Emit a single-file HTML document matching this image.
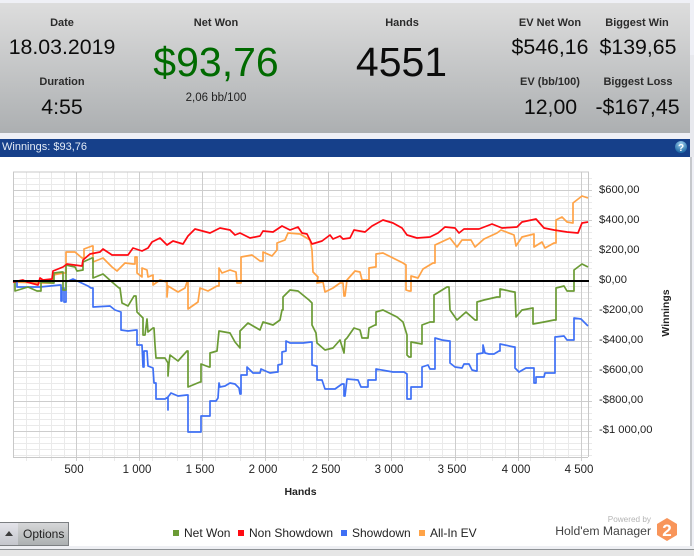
<!DOCTYPE html>
<html><head><meta charset="utf-8">
<style>
html,body{margin:0;padding:0}
body{width:694px;height:556px;overflow:hidden;position:relative;background:#eff0f6;font-family:"Liberation Sans",sans-serif;color:#111}
.a{position:absolute;white-space:nowrap;text-align:center;transform:translateX(-50%)}
.h{font-size:11px;font-weight:bold;color:#2b2b2b;line-height:14px}
.m{font-size:21.3px;line-height:26px;color:#0c0c0c}
.b{font-size:41px;line-height:46px}
.y{position:absolute;left:599px;font-size:11.2px;line-height:14px;color:#222}
.x{position:absolute;top:463px;font-size:11.5px;line-height:14px;color:#222;transform:translateX(-50%)}
.l{position:absolute;top:526px;font-size:12px;line-height:14px;color:#222}
.s{position:absolute;top:530px;width:6px;height:6px}
</style></head><body>
<div style="position:absolute;left:0;top:3px;width:690px;height:130px;background:linear-gradient(#dddddd,#acafb1)"></div>
<div class="a h" style="left:62px;top:16px">Date</div>
<div class="a m" style="left:62px;top:34px">18.03.2019</div>
<div class="a h" style="left:62px;top:75px">Duration</div>
<div class="a m" style="left:62px;top:94px">4:55</div>
<div class="a h" style="left:216px;top:16px">Net Won</div>
<div class="a b" style="left:216px;top:39px;color:#006a00">$93,76</div>
<div class="a" style="left:216px;top:91px;font-size:11.5px;line-height:14px;color:#222">2,06 bb/100</div>
<div class="a h" style="left:402px;top:16px">Hands</div>
<div class="a b" style="left:401.5px;top:39px;color:#0c0c0c">4551</div>
<div class="a h" style="left:550px;top:16px">EV Net Won</div>
<div class="a m" style="left:550px;top:34px">$546,16</div>
<div class="a h" style="left:637px;top:16px">Biggest Win</div>
<div class="a m" style="left:638px;top:34px">$139,65</div>
<div class="a h" style="left:550px;top:75px">EV (bb/100)</div>
<div class="a m" style="left:550.5px;top:94px">12,00</div>
<div class="a h" style="left:638px;top:75px">Biggest Loss</div>
<div class="a m" style="left:637.5px;top:94px">-$167,45</div>

<div style="position:absolute;left:0;top:139px;width:690px;height:18px;background:#16408a"></div>
<div style="position:absolute;left:2px;top:140px;font-size:11px;line-height:15px;color:#e4ecf6">Winnings: $93,76</div>
<svg style="position:absolute;left:674px;top:140px" width="14" height="14" viewBox="0 0 14 14"><defs><radialGradient id="q" cx=".5" cy=".25" r=".8"><stop offset="0" stop-color="#9fd0ee"/><stop offset="1" stop-color="#0f5c9c"/></radialGradient></defs><circle cx="7" cy="7" r="6" fill="url(#q)"/><text x="7" y="11" text-anchor="middle" font-family="Liberation Sans" font-weight="bold" font-size="10" fill="#fff">?</text></svg>

<div style="position:absolute;left:0;top:157px;width:690px;height:389px;background:#fff"></div>
<div style="position:absolute;left:690px;top:55px;width:4px;height:102px;background:#e8e9ee"></div>
<div style="position:absolute;left:690px;top:157px;width:2px;height:390px;background:#c6c8cc"></div>
<div style="position:absolute;left:0;top:546px;width:694px;height:3px;background:#eeeff3"></div>
<div style="position:absolute;left:0;top:549px;width:694px;height:1px;background:#8e9296"></div>
<div style="position:absolute;left:0;top:550px;width:694px;height:6px;background:#e6e6e6"></div>

<svg style="position:absolute;left:0;top:0" width="694" height="556" fill="none">
<path stroke="#eaeaea" d="M26.5 172V461M39.5 172V457M51.5 172V461M64.5 172V457M89.5 172V461M102.5 172V457M114.5 172V461M127.5 172V457M152.5 172V461M165.5 172V457M177.5 172V461M190.5 172V457M215.5 172V461M228.5 172V457M240.5 172V461M253.5 172V457M278.5 172V461M291.5 172V457M303.5 172V461M316.5 172V457M341.5 172V461M354.5 172V457M366.5 172V461M379.5 172V457M404.5 172V461M417.5 172V457M429.5 172V461M442.5 172V457M467.5 172V461M480.5 172V457M492.5 172V461M505.5 172V457M530.5 172V461M543.5 172V457M555.5 172V461M568.5 172V457"/>
<path stroke="#eaeaea" d="M13 178.5H592M13 184.5H592M13 196.5H592M13 202.5H592M13 208.5H592M13 214.5H592M13 226.5H592M13 232.5H592M13 238.5H592M13 244.5H592M13 256.5H592M13 262.5H592M13 268.5H592M13 274.5H592M13 286.5H592M13 292.5H592M13 298.5H592M13 304.5H592M13 316.5H592M13 322.5H592M13 328.5H592M13 334.5H592M13 347.5H592M13 353.5H592M13 359.5H592M13 365.5H592M13 377.5H592M13 383.5H592M13 389.5H592M13 395.5H592M13 407.5H592M13 413.5H592M13 419.5H592M13 425.5H592M13 437.5H592M13 443.5H592M13 449.5H592M13 455.5H592"/>
<path stroke="#cdcdcd" d="M76.5 172V461M139.5 172V461M202.5 172V461M265.5 172V461M328.5 172V461M391.5 172V461M455.5 172V461M518.5 172V461M581.5 172V461M13 190.5H592M13 220.5H592M13 250.5H592M13 310.5H592M13 341.5H592M13 371.5H592M13 401.5H592M13 431.5H592"/>
<path stroke="#c8c8c8" d="M13.5 457V172H588.5V457M13 457.5H588"/>
<g stroke-width="1.7" stroke-linejoin="round" stroke-linecap="butt">
<polyline stroke="#ffa347" points="13,282 40,283 53,283 53,275 63,273 65,273 66,273 66,252 75,252 82,258 84,258 84,249 92,246 93,246 93,262 103,258 112,267 117,271 125,263 133,264 135,264 135,257 137,257 137,273 142,277 142,268 147,270 148,277 153,275 153,285 160,280 167,282 167,297 168,286 178,292 185,288 187,282 188,282 188,309 198,302 200,288 208,291 217,286 219,286 219,268 222,273 230,270 236,272 237,283 240,283 241,283 241,257 252,255 260,261 263,261 263,252 272,256 277,250 277,243 285,240 288,233 300,234 310,240 312,250 313,272 318,277 317,283 323,282 325,292 333,288 340,283 343,283 344,296 345,296 347,280 355,271 360,272 362,280 367,280 369,280 369,268 375,267 376,267 376,254 383,253 397,260 403,263 406,265 406,290 409,291 411,291 411,276 418,278 423,269 433,263 435,263 435,245 450,238 457,247 462,240 471,240 475,247 484,239 497,233 501,230 514,235 516,246 522,237 534,234 534,247 542,242 545,248 554,243 556,243 556,220 562,217 567,222 573,223 573,203 582,196 588,198"/>
<polyline stroke="#3f70f5" points="13,282 17,282 17,287 40,287 60,285 61,285 61,301 62,301 62,288 64,288 64,302 66,302 66,282 73,279 88,286 91,288 93,288 93,307 110,306 115,310 121,312 121,330 128,331 136,330 137,330 137,345 142,345 143,367 144,367 144,351 147,351 148,366 153,368 154,383 156,383 156,399 165,399 168,397 168,410 168,397 171,393 178,396 187,395 188,395 188,432 200,432 201,432 201,416 209,416 210,416 210,401 216,401 218,398 219,383 220,387 225,386 230,383 235,384 239,388 240,394 241,394 241,375 247,375 247,367 253,373 260,373 261,369 270,373 277,372 278,372 278,365 282,364 282,352 286,351 286,341 290,343 303,343 311,342 312,342 312,365 316,366 317,366 317,380 322,380 325,389 335,389 342,384 344,384 344,396 345,396 347,379 358,380 361,387 367,387 368,387 368,380 375,380 376,380 376,369 393,372 404,372 407,374 407,399 410,399 411,399 411,387 422,387 422,367 428,365 430,369 434,369 435,369 435,338 442,340 449,341 450,341 450,363 455,367 462,368 464,364 469,364 472,370 476,371 477,371 477,354 483,353 483,345 485,353 489,354 494,354 499,351 500,351 500,344 514,347 515,347 515,368 519,372 526,368 533,368 534,368 534,383 536,383 536,377 544,377 545,373 554,373 555,373 555,337 564,336 567,340 574,340 574,318 581,319 588,326"/>
<polyline stroke="#6b9b35" points="13,282 15,282 15,291 28,287 37,291 41,291 41,282 53,283 54,283 54,273 62,272 63,272 63,290 65,290 66,290 66,265 75,267 77,271 83,270 83,262 92,258 93,258 93,278 103,274 112,282 119,288 120,288 122,303 128,306 134,296 136,296 137,312 143,318 143,335 145,335 147,319 148,332 153,328 154,328 155,345 156,358 165,358 168,363 168,376 169,363 170,355 178,361 187,351 188,351 188,387 200,382 201,382 201,364 209,367 210,367 210,353 217,351 219,331 230,333 235,342 240,348 240,331 248,323 260,330 263,322 273,325 280,320 282,310 283,310 283,297 290,290 298,291 309,300 312,303 312,325 316,333 317,343 325,350 333,348 340,340 344,353 345,340 347,338 354,328 360,330 362,338 367,338 368,338 369,328 375,325 376,325 376,312 383,310 397,317 403,322 407,335 407,355 409,357 411,357 411,342 422,344 422,325 430,322 434,322 434,295 447,287 449,287 450,310 457,320 466,312 475,320 477,320 477,302 484,300 497,297 500,297 500,289 514,292 515,292 516,317 522,310 533,308 533,324 544,322 554,320 556,320 556,288 564,286 567,291 574,291 574,270 582,264 588,267"/>
<polyline stroke="#ff0a12" points="13,282 23,280 27,282 38,285 40,278 43,280 52,279 53,271 63,267 67,264 82,266 83,260 90,254 100,252 103,249 112,255 128,255 133,248 142,251 148,248 152,242 160,238 167,245 173,241 183,244 188,236 195,229 210,233 220,228 230,230 235,235 240,233 250,238 260,236 263,231 273,232 282,226 290,230 298,227 302,233 307,234 312,244 322,241 330,235 333,239 340,236 343,239 350,238 354,230 365,232 372,226 383,220 393,223 402,228 407,235 417,238 430,237 438,233 445,227 455,228 459,233 464,229 479,229 492,224 502,228 517,227 522,222 536,219 544,228 554,230 567,232 578,233 582,223 588,222"/>
</g>
<path stroke="#000" stroke-width="2" d="M13 281H589"/>
</svg>

<div class="y" style="top:183px">$600,00</div>
<div class="y" style="top:213px">$400,00</div>
<div class="y" style="top:243px">$200,00</div>
<div class="y" style="top:273px">$0,00</div>
<div class="y" style="top:303px">-$200,00</div>
<div class="y" style="top:333px">-$400,00</div>
<div class="y" style="top:363px">-$600,00</div>
<div class="y" style="top:393px">-$800,00</div>
<div class="y" style="top:423px">-$1 000,00</div>
<div class="x" style="left:74px">500</div>
<div class="x" style="left:137px">1 000</div>
<div class="x" style="left:200px">1 500</div>
<div class="x" style="left:263px">2 000</div>
<div class="x" style="left:326px">2 500</div>
<div class="x" style="left:389px">3 000</div>
<div class="x" style="left:452px">3 500</div>
<div class="x" style="left:516px">4 000</div>
<div class="x" style="left:579px">4 500</div>
<div style="position:absolute;left:300.5px;top:485px;font-size:10.5px;line-height:14px;font-weight:bold;color:#222;transform:translateX(-50%)">Hands</div>
<div style="position:absolute;left:666px;top:313px;font-size:10.5px;line-height:14px;font-weight:bold;color:#222;transform:translate(-50%,-50%) rotate(-90deg)">Winnings</div>

<div style="position:absolute;left:0;top:522px;width:68px;height:22px;border:1px solid #7c7f82;border-left:0;background:linear-gradient(#d6d7d8,#acb0b1)"></div>
<div style="position:absolute;left:0;top:523px;width:18px;height:22px;background:linear-gradient(#e4e4ea,#c4c6cc)"></div>
<div style="position:absolute;left:5px;top:531px;width:0;height:0;border:4px solid transparent;border-top:0;border-bottom:5px solid #3c3c3c"></div>
<div style="position:absolute;left:23px;top:527px;font-size:12px;line-height:14px;color:#222">Options</div>

<div class="s" style="left:173px;background:#6b9b35"></div><div class="l" style="left:184px">Net Won</div>
<div class="s" style="left:238px;background:#ff0a12"></div><div class="l" style="left:249px">Non Showdown</div>
<div class="s" style="left:341px;background:#3f70f5"></div><div class="l" style="left:352px">Showdown</div>
<div class="s" style="left:419px;background:#ffa347"></div><div class="l" style="left:430px">All-In EV</div>

<div style="position:absolute;right:43px;top:514px;font-size:8.2px;line-height:12px;color:#b4b4b4">Powered by</div>
<div style="position:absolute;right:43px;top:524px;font-size:12.2px;line-height:15px;color:#444">Hold'em Manager</div>
<svg style="position:absolute;left:655px;top:517px" width="24" height="25" viewBox="0 0 24 25"><polygon points="12,1 22,7 22,18 12,24 2,18 2,7" fill="#f8955a"/><text x="12" y="19" text-anchor="middle" font-family="Liberation Sans" font-weight="bold" font-size="17" fill="#fff">2</text></svg>
</body></html>
